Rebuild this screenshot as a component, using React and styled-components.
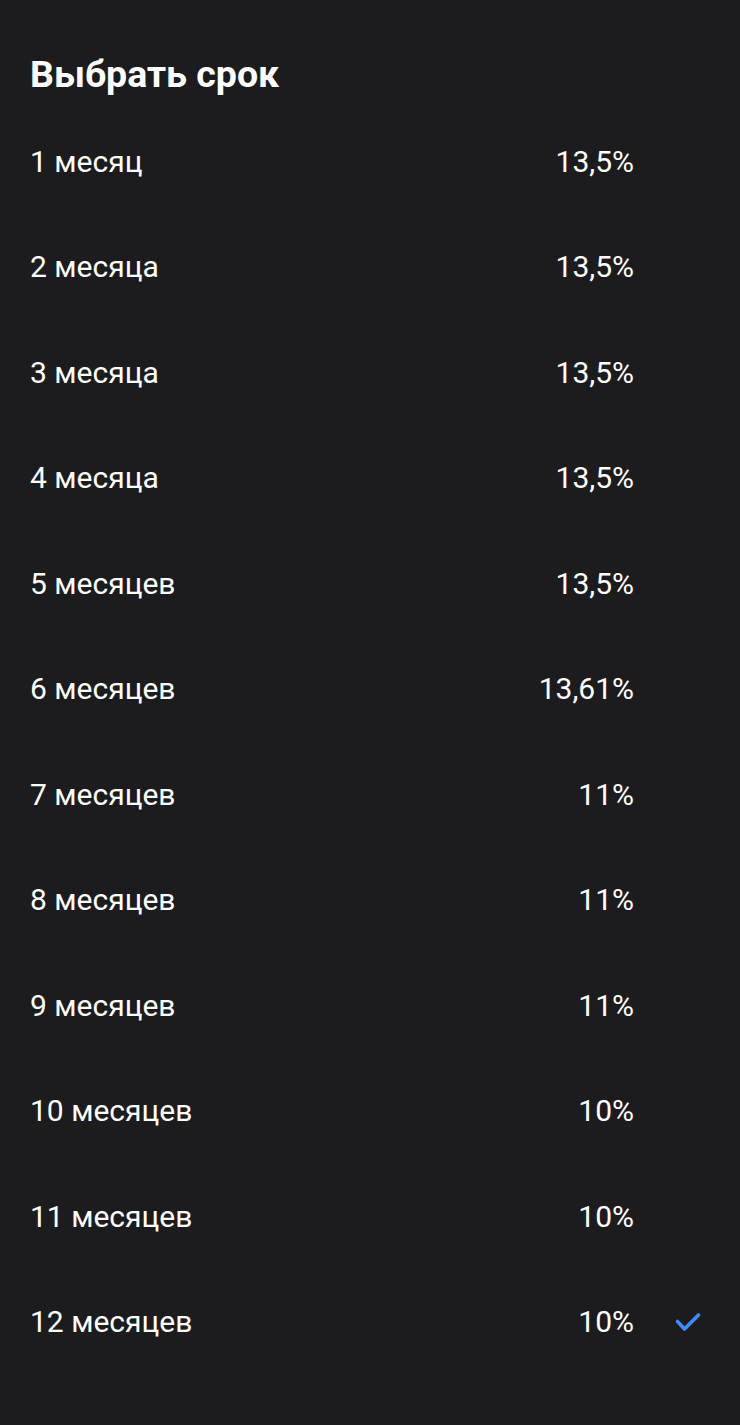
import React from "react";
import styled, {createGlobalStyle} from "styled-components";

const GlobalStyle = createGlobalStyle`
  html, body {
    margin: 0;
    padding: 0;
    background: #1c1c1e;
  }
  body {
    font-family: Roboto, "Noto Sans", "DejaVu Sans", sans-serif;
    -webkit-font-smoothing: antialiased;
  }
`;

const Sheet = styled.div`
  width: 740px;
  min-height: 1425px;
  background: #1c1c1e;
  color: #ffffff;
  box-sizing: border-box;
`;

const Title = styled.h1`
  margin: 0;
  height: 109px;
  padding: 51px 0 0 30px;
  box-sizing: border-box;
  font-size: 37.5px;
  font-weight: 700;
  line-height: 46px;
  letter-spacing: 0;
`;

const List = styled.ul`
  list-style: none;
  margin: 0;
  padding: 0;
`;

const Row = styled.li`
  height: 105.5px;
  display: grid;
  grid-template-columns: 1fr auto 106px;
  align-items: center;
  padding-left: 30px;
  font-size: 30px;
  line-height: 34px;
  cursor: pointer;
`;

const Term = styled.span`
  color: #ffffff;
`;

const Rate = styled.span`
  color: #ffffff;
  text-align: right;
`;

const Mark = styled.span`
  display: flex;
  align-items: center;
  justify-content: flex-start;
  padding-left: 41px;
  color: ${(p) => (p.$on ? "#3f8cf6" : "transparent")};
`;

const terms = [
    ["1 месяц", "13,5%"],
    ["2 месяца", "13,5%"],
    ["3 месяца", "13,5%"],
    ["4 месяца", "13,5%"],
    ["5 месяцев", "13,5%"],
    ["6 месяцев", "13,61%"],
    ["7 месяцев", "11%"],
    ["8 месяцев", "11%"],
    ["9 месяцев", "11%"],
    ["10 месяцев", "10%"],
    ["11 месяцев", "10%"],
    ["12 месяцев", "10%"],
];

const Check = () => (
    <svg width="26" height="20" viewBox="0 0 26 20" fill="none">
        <path d="M2.5 9.5l7 7.5L23.5 3" stroke="currentColor" strokeWidth="3.6" strokeLinecap="round" strokeLinejoin="round"/>
    </svg>
);

export default function App() {
    const selected = 11;
    return (
        <Sheet>
            <GlobalStyle/>
            <Title>Выбрать срок</Title>
            <List>
                {terms.map(([t, r], i) => (
                    <Row key={t}>
                        <Term>{t}</Term>
                        <Rate>{r}</Rate>
                        <Mark $on={i === selected}>
                            {i === selected && <Check/>}
                        </Mark>
                    </Row>
                ))}
            </List>
        </Sheet>
    );
}
